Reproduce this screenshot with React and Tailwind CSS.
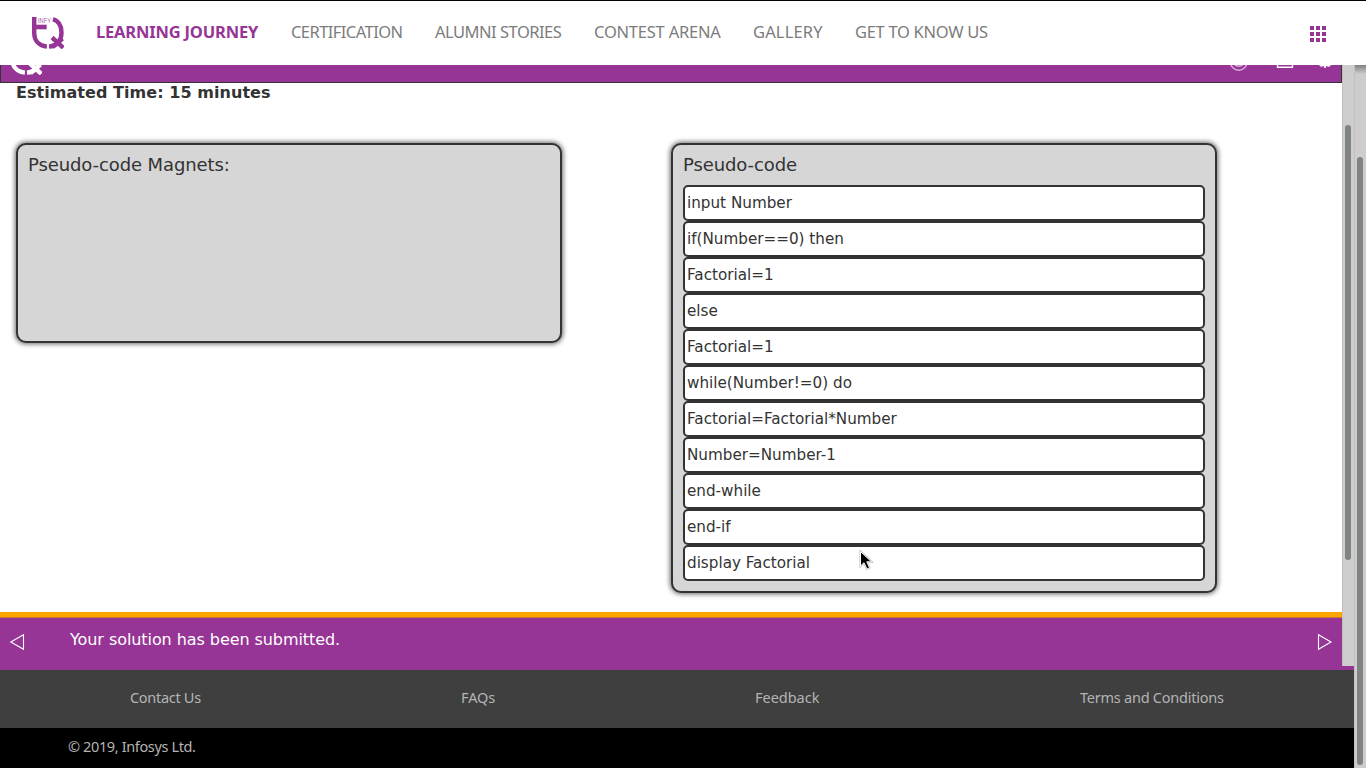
const rows = [
  'input Number',
  'if(Number==0) then',
  'Factorial=1',
  'else',
  'Factorial=1',
  'while(Number!=0) do',
  'Factorial=Factorial*Number',
  'Number=Number-1',
  'end-while',
  'end-if',
  'display Factorial',
];

const nav = [
  { label: 'CERTIFICATION', cls: 'w-[144px] tracking-[-0.56px]' },
  { label: 'ALUMNI STORIES', cls: 'w-[159px] tracking-[-0.5px]' },
  { label: 'CONTEST ARENA', cls: 'w-[159px] tracking-[-0.22px]' },
  { label: 'GALLERY', cls: 'w-[102px] tracking-[0.15px]' },
  { label: 'GET TO KNOW US', cls: 'w-[150px] tracking-[-0.3px]' },
];

function Logo({ className, label }) {
  return (
    <svg viewBox="0 0 32 32" className={className} fill="none" stroke="currentColor" strokeWidth="4.4">
      <path d="M0 0.600H4.500" strokeWidth="1.200" />
      <path d="M2.200 0.500V16C2.200 23.500 7 28.800 14.900 29.600" />
      <path d="M0 10H14.700" strokeWidth="4.600" />
      <path d="M21 2.200C26.500 4 29.500 9 29.500 15.500C29.500 23.800 24.500 29 17 29.600" />
      <path d="M20 20.500L31.300 30.800M30.500 21.500L20.500 30.200" strokeWidth="4.400" />
      {label && (
        <g stroke="none" fill="currentColor" opacity="0.8">
          <text x="6" y="5.600" fontSize="6.500" fontFamily="Liberation Sans" textLength="13" lengthAdjust="spacingAndGlyphs">
            INFY
          </text>
        </g>
      )}
    </svg>
  );
}

function Panel({ title, className, children }) {
  return (
    <section className={`w-[546px] shrink-0 rounded-[10px] border-2 border-[#333] bg-[#d6d6d6] px-2.5 shadow-[0_0_5px_1px_rgba(0,0,0,0.6)] ${className}`}>
      <h2 className="h-10 pt-[9px] text-[18px] leading-[22px] tracking-[-0.1px]">{title}</h2>
      {children}
    </section>
  );
}

export default function App() {
  return (
    <div className="flex h-[768px] w-[1366px] overflow-hidden bg-white font-['DejaVu_Sans',sans-serif] text-[#333]">
      <div className="flex w-[1354px] shrink-0 flex-col">
        <header className="z-10 flex h-[65px] w-[1366px] shrink-0 border-t border-black bg-white pt-px font-['Noto_Sans',sans-serif]">
          <Logo className="ml-8 mt-[15px] h-8 w-8 shrink-0 text-[#963596]" label />
          <nav className="ml-8 flex pt-[18px] text-[16.5px] leading-6 whitespace-nowrap text-[#7c7c7c]">
            <a className="w-[195px] font-bold tracking-[-0.18px] text-[#963596]">LEARNING JOURNEY</a>
            {nav.map((n) => (
              <a key={n.label} className={n.cls}>{n.label}</a>
            ))}
          </nav>
          <div className="mt-6 ml-auto mr-10 grid h-4 w-4 grid-cols-3 gap-0.5">
            {Array.from({ length: 9 }, (_, i) => (
              <i key={i} className="h-1 w-1 bg-[#963596]" />
            ))}
          </div>
        </header>

        <div className="flex h-[601px] shrink-0">
          <main className="flex w-[1342px] flex-col">
            <div className="flex h-[18px] shrink-0 overflow-hidden border border-t-0 border-[#333] bg-[#963596] text-white">
              <Logo className="ml-[9px] -mt-[22px] h-8 w-8 shrink-0" />
              <svg className="ml-auto h-[18px] w-[142px]" viewBox="0 0 142 18" fill="none" stroke="white">
                <circle cx="39.700" cy="-3" r="8.200" stroke="#dcb0dc" strokeWidth="1.500" />
                <path d="M35 -0.500Q39.700 3 44.400 -0.500" stroke="#dcb0dc" strokeWidth="1.500" />
                <path d="M78.500 -8V2.300H93.500V-8" strokeWidth="1.400" />
                <path d="M120.500 0H131.500" strokeWidth="2" />
                <path d="M126 -4V2.800M122.500 -2V1.700M129.500 -2V1.700" strokeWidth="2.200" />
              </svg>
            </div>
            <p className="ml-4 text-[16px] leading-5 font-bold tracking-[0.05px]">Estimated Time: 15 minutes</p>
            <div className="ml-4 mt-10 flex items-start gap-[109px]">
              <Panel title="Pseudo-code Magnets:" className="h-[200px]" />
              <Panel title="Pseudo-code" className="h-[450px]">
                <ul>
                  {rows.map((r, i) => (
                    <li key={i} className="h-9 rounded-[5px] border-2 border-[#333] bg-white pl-0.5 text-[15.2px] leading-8">
                      {r}
                    </li>
                  ))}
                </ul>
              </Panel>
            </div>
            <div className="mt-auto h-[54px] shrink-0 border-t-[5px] border-[#ffa500] bg-[#963596]">
              <div className="flex h-[49px] border-t border-[#c77a2c] text-white">
                <svg className="ml-2 mt-[14px] h-5 w-5" viewBox="0 0 20 20" fill="none" stroke="white" strokeWidth="1.1">
                  <path d="M15.500 2.700V17.300L2.800 10Z" />
                </svg>
                <p className="ml-[42px] pt-3 text-[16px] leading-5 tracking-[-0.07px]">Your solution has been submitted.</p>
                <svg className="ml-auto mr-2 mt-[14px] h-5 w-5" viewBox="0 0 20 20" fill="none" stroke="white" strokeWidth="1.1">
                  <path d="M4.500 2.700V17.300L17 10Z" />
                </svg>
              </div>
            </div>
          </main>
          <div className="w-3 border-l border-[#c5c0b8] bg-[#cdcdcd] pl-0.5 pt-[60px]">
            <div className="h-[435px] w-1.5 rounded-full bg-[#7f8383]" />
          </div>
        </div>

        <div className="h-1 shrink-0 bg-[#963596]" />
        <footer className="shrink-0 font-['Noto_Sans',sans-serif] text-[14.5px] leading-5 whitespace-nowrap text-[#b4b4b4]">
          <div className="flex h-[58px] bg-[#3f3f3f] pt-[17px] pl-[130px]">
            <a className="w-[331px] tracking-[-0.3px]">Contact Us</a>
            <a className="w-[294px] tracking-[-0.1px]">FAQs</a>
            <a className="w-[325px] tracking-[-0.02px]">Feedback</a>
            <a className="tracking-[-0.24px]">Terms and Conditions</a>
          </div>
          <div className="h-10 bg-black pt-2 pl-[68px] tracking-[-0.37px]">© 2019, Infosys Ltd.</div>
        </footer>
      </div>
      <div className="mt-[65px] w-3 border-l border-[#c5c0b8] bg-[#cdcdcd] bg-[linear-gradient(#808080,#cdcdcd_9px)] pl-0.5 pt-[92px]">
        <div className="h-[608px] w-1.5 rounded-full bg-[#7f8383]" />
      </div>
      <svg className="absolute top-[550px] left-[859px] z-20 h-[21px] w-[15px]" viewBox="0 0 15 21">
        <path d="M1.500 1.500V16L5 12.800L8 19L10.500 17.800L7.800 11.800H12.500Z" fill="black" stroke="#bbb" strokeWidth="2" />
        <path d="M1.500 1.500V16L5 12.800L8 19L10.500 17.800L7.800 11.800H12.500Z" fill="black" stroke="white" strokeWidth="1" />
      </svg>
    </div>
  );
}
